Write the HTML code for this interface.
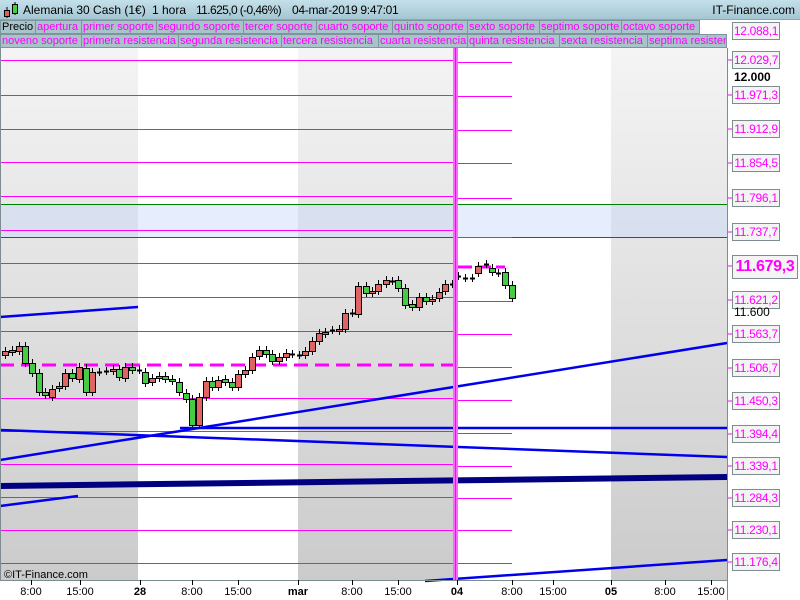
<!DOCTYPE html>
<html><head><meta charset="utf-8"><style>
*{margin:0;padding:0;box-sizing:border-box}
body{width:800px;height:600px;overflow:hidden;background:#fff;font-family:"Liberation Sans",sans-serif;position:relative}
#hdr{position:absolute;left:0;top:0;width:800px;height:20px;background:linear-gradient(#c4e0ea,#a4c6d2);border-bottom:1px solid #8aa;font-size:12px;line-height:20px}
.row{position:absolute;left:0;height:14px;width:727px;background:#fff}
.c{position:absolute;top:0;height:14px;background:#a9c3cb;border:1px solid #7d969e;color:#ff00ff;font-size:11px;line-height:12px;padding-left:1px;white-space:nowrap;overflow:hidden}
.lab{position:absolute;left:732px;width:48px;height:18px;border:1px solid #7d8c90;background:#f4f4f4;color:#ff00ff;font-size:12px;line-height:16px;text-align:center;letter-spacing:-0.3px}
.tk{position:absolute;top:586px;font-size:11px;color:#000;transform:translateX(-50%)}
</style></head><body>
<div id="hdr">
<svg style="position:absolute;left:3px;top:2px" width="16" height="16"><line x1="4" y1="5" x2="4" y2="16" stroke="#000"/><rect x="1.5" y="8.5" width="5" height="6" fill="#e06060" stroke="#000"/><line x1="12" y1="0" x2="12" y2="13" stroke="#000"/><rect x="9.5" y="2.5" width="5" height="9" fill="#40d040" stroke="#000"/></svg>
<span style="position:absolute;left:23px">Alemania 30 Cash (1€)</span>
<span style="position:absolute;left:152px">1 hora</span>
<span style="position:absolute;left:196px;letter-spacing:-0.6px">11.625,0 (-0,46%)</span>
<span style="position:absolute;left:292px;letter-spacing:-0.3px">04-mar-2019 9:47:01</span>
<span style="position:absolute;right:5px">IT-Finance.com</span>
</div>
<div class="row" style="top:20px">
<div class="c" style="left:0;width:36px;color:#000">Precio</div>
<div class="c" style="left:35px;width:47px">apertura</div>
<div class="c" style="left:81px;width:76px">primer soporte</div>
<div class="c" style="left:156px;width:88px">segundo soporte</div>
<div class="c" style="left:243px;width:74px">tercer soporte</div>
<div class="c" style="left:316px;width:77px">cuarto soporte</div>
<div class="c" style="left:392px;width:76px">quinto soporte</div>
<div class="c" style="left:467px;width:73px">sexto soporte</div>
<div class="c" style="left:539px;width:83px">septimo soporte</div>
<div class="c" style="left:621px;width:79px">octavo soporte</div>
</div>
<div class="row" style="top:34px">
<div class="c" style="left:0;width:82px">noveno soporte</div>
<div class="c" style="left:81px;width:98px">primera resistencia</div>
<div class="c" style="left:178px;width:104px">segunda resistencia</div>
<div class="c" style="left:281px;width:98px">tercera resistencia</div>
<div class="c" style="left:378px;width:90px">cuarta resistencia</div>
<div class="c" style="left:467px;width:93px">quinta resistencia</div>
<div class="c" style="left:559px;width:89px">sexta resistencia</div>
<div class="c" style="left:647px;width:80px">septima resistencia</div>
</div>
<svg id="ch" style="position:absolute;left:0;top:48px" width="800" height="552">
<defs><linearGradient id="g" x1="0" y1="0" x2="0" y2="1"><stop offset="0" stop-color="#f4f4f4"/><stop offset="1" stop-color="#cbcbcb"/></linearGradient></defs>
<rect x="0" y="0" width="138" height="532" fill="url(#g)"/>
<rect x="298" y="0" width="157" height="532" fill="url(#g)"/>
<rect x="611" y="0" width="116" height="532" fill="url(#g)"/>
<rect x="0" y="156" width="727" height="33" fill="#c8d8f8" opacity="0.45"/>
<line x1="0" y1="156.5" x2="727" y2="156.5" stroke="#008000"/>
<line x1="0" y1="189.5" x2="727" y2="189.5" stroke="#008000"/>
<g id="mag" stroke="#ff00ff" stroke-width="1"></g>
<g id="cnd"></g>
<g stroke="#0000ee" stroke-width="2.5" fill="none">
<line x1="0" y1="269" x2="138" y2="259"/>
<line x1="0" y1="412" x2="727" y2="295"/>
<line x1="0" y1="382" x2="727" y2="409"/>
<line x1="180" y1="380" x2="727" y2="380"/>
<line x1="0" y1="458" x2="78" y2="448"/>
<line x1="425" y1="533" x2="727" y2="512"/>
</g>
<line x1="0" y1="438" x2="727" y2="429" stroke="#000080" stroke-width="6"/>
<rect x="453" y="0" width="5" height="532" fill="#ff66ff"/>
<line x1="455.5" y1="0" x2="455.5" y2="532" stroke="#ff00ff"/>
<line x1="0" y1="532.5" x2="727" y2="532.5" stroke="#7d8c90"/>
<line x1="727.5" y1="0" x2="727.5" y2="552" stroke="#7d8c90"/>
<line x1="0.5" y1="0" x2="0.5" y2="532" stroke="#7d8c90"/>
<g id="tks" stroke="#000"></g>
<text x="4" y="530" font-size="11" fill="#000" font-family="Liberation Sans">©IT-Finance.com</text>
</svg>
<div class="lab" style="top:22px">12.088,1</div>
<div class="lab" style="top:51px">12.029,7</div>
<div style="position:absolute;left:734px;top:70px;font-size:12px;font-weight:bold">12.000</div>
<div class="lab" style="top:86px">11.971,3</div>
<div class="lab" style="top:120px">11.912,9</div>
<div class="lab" style="top:154px">11.854,5</div>
<div class="lab" style="top:189px">11.796,1</div>
<div class="lab" style="top:223px">11.737,7</div>
<div class="lab" style="top:255px;width:66px;height:24px;font-size:16px;font-weight:bold;line-height:22px">11.679,3</div>
<div class="lab" style="top:291px">11.621,2</div>
<div style="position:absolute;left:734px;top:305px;font-size:12px">11.600</div>
<div class="lab" style="top:325px">11.563,7</div>
<div class="lab" style="top:359px">11.506,7</div>
<div class="lab" style="top:392px">11.450,3</div>
<div class="lab" style="top:425px">11.394,4</div>
<div class="lab" style="top:457px">11.339,1</div>
<div class="lab" style="top:489px">11.284,3</div>
<div class="lab" style="top:521px">11.230,1</div>
<div class="lab" style="top:553px">11.176,4</div>
<div class="tk" style="left:31px">8:00</div><div class="tk" style="left:80px">15:00</div><div class="tk" style="left:140px;font-weight:bold">28</div>
<div class="tk" style="left:192px">8:00</div><div class="tk" style="left:238px">15:00</div><div class="tk" style="left:298px;font-weight:bold">mar</div>
<div class="tk" style="left:352px">8:00</div><div class="tk" style="left:398px">15:00</div><div class="tk" style="left:457px;font-weight:bold">04</div>
<div class="tk" style="left:512px">8:00</div><div class="tk" style="left:553px">15:00</div><div class="tk" style="left:611px;font-weight:bold">05</div>
<div class="tk" style="left:665px">8:00</div><div class="tk" style="left:711px">15:00</div>
<script>
var NS="http://www.w3.org/2000/svg",T=48;
function el(p,n,a){var e=document.createElementNS(NS,n);for(var k in a)e.setAttribute(k,a[k]);p.appendChild(e);return e;}
var m=document.getElementById("mag");
var L=[60,95,129,162,196,230,263,297,331,398,431,464,497,530,563];
L.forEach(function(y){el(m,"line",{x1:0,y1:y+.5-T,x2:455,y2:y+.5-T});});
el(m,"line",{x1:0,y1:365-T,x2:455,y2:365-T,"stroke-width":3,"stroke-dasharray":"14 7"});
var R=[62,96,130,163,198,237,301,334,367,400,433,466,498,530,563];
R.forEach(function(y){el(m,"line",{x1:458,y1:y+.5-T,x2:512,y2:y+.5-T});});
el(m,"line",{x1:458,y1:267-T,x2:505,y2:267-T,"stroke-width":3,"stroke-dasharray":"14 5"});
[30,60,95,129,163,198,232,266,300,334,368,401,434,466,498,530,562].forEach(function(y){el(m,"line",{x1:727,y1:y-T,x2:732,y2:y-T});});
var C=[[5,351,355],[12,350,352],[19,346,351],[25,363,346],[32,373,363],[39,392,373],[45,395,392],[52,389,397],[59,386,388],[65,373,386],[72,378,373],[79,367,379],[86,392,368],[92,372,392],[99,372,372],[106,371,371],[113,369,371],[119,377,369],[125,367,378],[132,370,367],[139,370,370],[145,383,372],[152,378,382],[159,376,378],[165,379,376],[172,381,379],[179,392,382],[186,399,393],[192,425,399],[199,397,425],[206,381,397],[212,387,381],[218,380,387],[225,382,379],[232,387,382],[238,374,387],[245,370,374],[252,357,370],[259,350,356],[266,354,350],[272,361,354],[279,357,361],[286,353,357],[292,354,354],[299,355,355],[305,351,355],[312,341,351],[319,333,341],[325,332,334],[332,330,330],[339,329,331],[345,313,329],[352,313,313],[358,286,314],[366,293,286],[372,291,293],[378,284,291],[386,280,284],[392,281,281],[398,288,280],[405,305,288],[412,307,304],[419,297,307],[426,301,297],[432,299,301],[439,292,298],[445,284,291],[452,284,284],[458,276,276],[465,278,278],[472,278,278],[478,266,273],[486,264,264],[492,272,268],[498,273,273],[505,285,272],[512,298,285]];
var g=document.getElementById("cnd");
C.forEach(function(c){var x=c[0],o=c[1]-T,cl=c[2]-T,top=Math.min(o,cl),bot=Math.max(o,cl);
el(g,"line",{x1:x+.5,y1:top-4,x2:x+.5,y2:bot+4,stroke:"#000"});
if(bot-top<1.5){el(g,"line",{x1:x-2,y1:top+.5,x2:x+3,y2:top+.5,stroke:"#000","stroke-width":2});}
else el(g,"rect",{x:x-2.5,y:top+.5,width:6,height:bot-top,fill:cl<o?"#44cc44":"#e06464",stroke:"#000"});});
var t=document.getElementById("tks");
[31,80,140,192,238,298,352,398,457,512,553,611,665,711].forEach(function(x){el(t,"line",{x1:x+.5,y1:532,x2:x+.5,y2:537});});
</script>
</body></html>
